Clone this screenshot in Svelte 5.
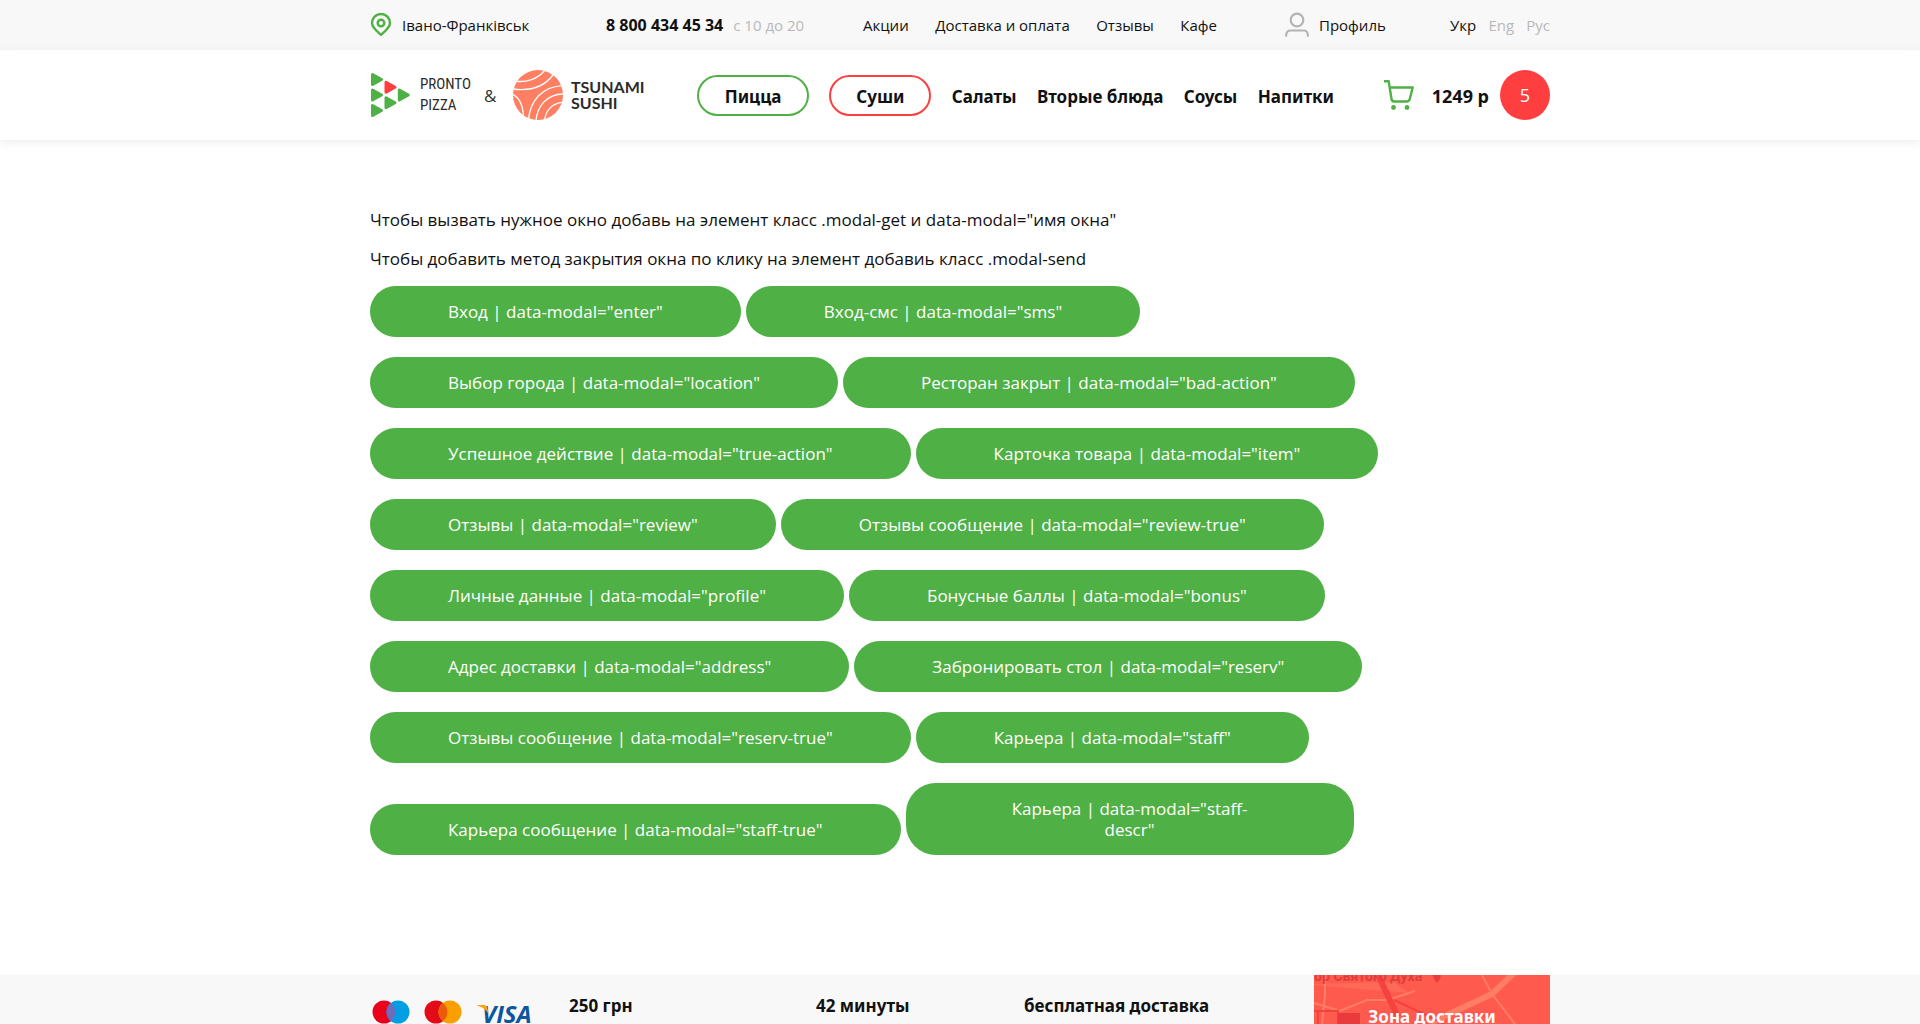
<script>
  const topLinks = ['Акции', 'Доставка и оплата', 'Отзывы', 'Кафе'];
  const dishes = ['Салаты', 'Вторые блюда', 'Соусы', 'Напитки'];
  const rows = [
    [['Вход', 'enter'], ['Вход-смс', 'sms']],
    [['Выбор города', 'location'], ['Ресторан закрыт', 'bad-action']],
    [['Успешное действие', 'true-action'], ['Карточка товара', 'item']],
    [['Отзывы', 'review'], ['Отзывы сообщение', 'review-true']],
    [['Личные данные', 'profile'], ['Бонусные баллы', 'bonus']],
    [['Адрес доставки', 'address'], ['Забронировать стол', 'reserv']],
    [['Отзывы сообщение', 'reserv-true'], ['Карьера', 'staff']],
    [['Карьера сообщение', 'staff-true'], ['Карьера', 'staff-descr']]
  ];
</script>

<div class="page">
  <div class="topbar">
    <div class="container top">
      <a class="place" href="#city">
        <svg width="22" height="24" viewBox="0 0 22 24" fill="none" stroke="#4fb045" stroke-width="2.4">
          <path d="M11 21.8C8 19.2 2 14.8 2 10a9 9 0 0 1 18 0c0 4.800-6 9.200-9 11.800z" stroke-linejoin="round" />
          <circle cx="11" cy="10" r="3.300" />
        </svg>
        Івано-Франківськ
      </a>
      <div class="phone"><a href="tel:88004344534">8 800 434 45 34</a><span>с 10 до 20</span></div>
      <nav class="links">
        {#each topLinks as link}<a href="#{link}">{link}</a>{/each}
      </nav>
      <a class="profile" href="#profile">
        <svg width="24" height="26" viewBox="0 0 24 26" fill="none" stroke="#b4b4b4" stroke-width="2.200" stroke-linecap="round">
          <circle cx="12" cy="8" r="6.300" />
          <path d="M1.200 23.800v-1.300a4 4 0 0 1 4-4h13.600a4 4 0 0 1 4 4v1.300" />
        </svg>
        Профиль
      </a>
      <div class="langs">
        <a class="current" href="#uk">Укр</a><a href="#en">Eng</a><a href="#ru">Рус</a>
      </div>
    </div>
  </div>

  <header>
    <div class="container head">
      <div class="brands">
        <a class="brand pronto" href="#pizza">
          <svg width="41" height="46" viewBox="0 0 41 46" stroke-width="3" stroke-linejoin="round">
            <g fill="#4fb045" stroke="#4fb045">
              <path d="M2.500 2.500v10l9-5z" /><path d="M2.500 18v10l9-5z" /><path d="M2.500 33.500v10l9-5z" />
              <path d="M16 25.800v10l9-5z" /><path d="M29.300 18v10l9-5z" />
            </g>
            <path fill="#ff3f3f" stroke="#ff3f3f" d="M16 10.300v10l9-5z" />
          </svg>
          <span>PRONTO<br />PIZZA</span>
        </a>
        <span class="amp">&amp;</span>
        <a class="brand tsunami" href="#sushi">
          <svg width="50" height="50" viewBox="0 0 50 50">
            <clipPath id="disc"><circle cx="25" cy="25" r="25" /></clipPath>
            <g clip-path="url(#disc)">
              <path fill="#ff7f63" d="M0 0h50v50H0z" />
              <g fill="none" stroke="#fff" stroke-width="1.300">
                <path d="M2 11C13 13 25 9 32 0" />
                <path d="M0 19c16 2 31-2 40-14" />
                <path d="M-1 24c7 3 11 11 11.500 23" />
                <path d="M15.500 50C17 31 29 16 51 15.500" />
                <path d="M23 51c1-15 11-27 28-27" />
                <path d="M31.500 51c1-10 7-18 19-19" />
              </g>
            </g>
          </svg>
          <span>TSUNAMI<br />SUSHI</span>
        </a>
      </div>
      <nav class="menu">
        <a class="pill" href="#pizza">Пицца</a>
        <a class="pill red" href="#sushi">Суши</a>
        {#each dishes as dish}<a href="#{dish}">{dish}</a>{/each}
      </nav>
      <a class="cart" href="#cart">
        <svg width="30" height="30" viewBox="0 0 30 30" fill="none" stroke="#4fb045" stroke-width="2.400" stroke-linejoin="round">
          <path d="M0 1.300h4.700L7.500 19a3 3 0 0 0 3 2.500h12.300a3 3 0 0 0 2.900-2.200l3-11.800H6" />
          <g fill="#4fb045" stroke="none"><circle cx="9.500" cy="27.500" r="2.400" /><circle cx="23" cy="27.500" r="2.400" /></g>
        </svg>
        <span class="sum">1249 р</span>
        <span class="count">5</span>
      </a>
    </div>
  </header>

  <main class="container">
    <div class="intro">
      <p>Чтобы вызвать нужное окно добавь на элемент класс .modal-get и data-modal="имя окна"</p>
      <p>Чтобы добавить метод закрытия окна по клику на элемент добавиь класс .modal-send</p>
    </div>
    {#each rows as row}
      <div class="row">
        {#each row as [title, modal]}
          <button type="button" data-modal={modal}>{title} | data-modal="{modal}"</button>
        {/each}
      </div>
    {/each}
  </main>

  <footer>
    <div class="container foot">
      <div class="cards">
        <svg width="38" height="24" viewBox="0 0 38 24" role="img" aria-label="Maestro">
          <circle cx="12" cy="12" r="11.500" fill="#eb001b" /><circle cx="26" cy="12" r="11.500" fill="#009fe3" />
          <path d="M19 2.900a11.500 11.500 0 0 1 0 18.200a11.500 11.500 0 0 1 0-18.200z" fill="#6c6bbd" />
        </svg>
        <svg width="38" height="24" viewBox="0 0 38 24" role="img" aria-label="Mastercard">
          <circle cx="12" cy="12" r="11.500" fill="#e30b17" /><circle cx="26" cy="12" r="11.500" fill="#f9a000" />
          <path d="M19 2.900a11.500 11.500 0 0 1 0 18.200a11.500 11.500 0 0 1 0-18.200z" fill="#ea5b0c" />
        </svg>
        <svg class="visa" width="60" height="24" viewBox="0 0 60 24">
          <text x="6" y="23">VISA</text>
          <path d="M1 5h7c2 0 3 1 3 2l2 8C11 10 6 7 1 5.500z" fill="#f9a51a" />
        </svg>
      </div>
      <strong>250 грн</strong>
      <strong>42 минуты</strong>
      <strong>бесплатная доставка</strong>
      <a class="zone" href="#zone">
        <svg viewBox="0 0 236 49" preserveAspectRatio="xMidYMin slice" aria-hidden="true">
          <path fill="#ff5a4e" d="M0 0h236v49H0z" />
          <path fill="#ff6a58" d="M0 9l80-2 14 11-94-8z" />
          <g fill="none" stroke="#ff7d64">
            <path stroke-width="6" d="M116 48l62-29 22-21" />
            <path stroke-width="2" d="M23 37l30-12h21l27-9M168 0l10 19 23 30M11 0v20L8 49M0 28l26 8" />
          </g>
          <g fill="none" stroke="#f5423f">
            <path stroke-width="6" d="M64 0l20 42" />
            <path stroke-width="2" d="M0 36h24v13M4 49V36M80 25l30 14 20 10" />
          </g>
          <text x="0" y="6">ор Святого Духа</text>
          <path fill="#e93b3b" d="M24 38h22v11H24zM119 0h8l-1 4-3 4-3-4z" />
        </svg>
        <span>Зона доставки</span>
      </a>
    </div>
  </footer>
</div>

<style>
  :global(body) {
    margin: 0;
    background: #fff;
  }
  .page {
    display: flex;
    flex-direction: column;
    min-height: 100vh;
    color: #111;
    font: 17px/21px "Open Sans", "Noto Sans", sans-serif;
  }
  .container {
    box-sizing: border-box;
    width: 100%;
    max-width: 1180px;
    margin: 0 auto;
  }
  a {
    color: inherit;
    text-decoration: none;
    white-space: nowrap;
  }
  svg {
    display: block;
    flex: none;
  }
  .topbar {
    background: #f8f8f8;
    font-size: 15px;
  }
  .top {
    display: grid;
    grid-template-columns: 236px 257px 422px 165px 1fr;
    align-items: center;
    height: 50px;
  }
  .place, .profile {
    display: flex;
    align-items: center;
    gap: 10px;
  }
  .phone {
    display: flex;
    gap: 10px;
  }
  .phone a {
    font-size: 16px;
    font-weight: 700;
  }
  .phone span, .langs {
    color: #b8b8b8;
  }
  .links {
    display: flex;
    justify-content: space-between;
    width: 354px;
  }
  .langs {
    display: flex;
    justify-content: space-between;
  }
  .current {
    color: #111;
  }
  header {
    box-shadow: 0 2px 10px rgba(0, 0, 0, 0.08);
  }
  .head {
    display: grid;
    grid-template-columns: 327px 637px 1fr;
    align-items: center;
    height: 90px;
  }
  .brands, .brand, .cart {
    display: flex;
    align-items: center;
  }
  .brand {
    color: #2b2b2b;
  }
  .pronto {
    gap: 9px;
    width: 114px;
    font: 15px/21px "Roboto Condensed", "Liberation Sans Narrow", "DejaVu Sans Condensed", sans-serif;
  }
  .amp {
    width: 29px;
    color: #333;
  }
  .tsunami {
    gap: 8px;
    font: 700 16px/16px Lato, sans-serif;
  }
  .menu {
    display: flex;
    align-items: center;
    justify-content: space-between;
    font-family: "Noto Sans", sans-serif;
    font-weight: 700;
  }
  .menu a {
    padding-top: 2px;
  }
  .menu .pill {
    box-sizing: border-box;
    min-width: 112px;
    padding: 9px 20px 7px;
    border: 2px solid #4fb045;
    border-radius: 21px;
    text-align: center;
  }
  .menu .red {
    min-width: 102px;
    border-color: #ff3f3f;
  }
  .cart {
    justify-content: flex-end;
    font-size: 18px;
  }
  .sum {
    margin: 0 11px 0 18px;
    padding-top: 2px;
    font-weight: 700;
  }
  .count {
    width: 50px;
    border-radius: 50%;
    background: #ff3f3f;
    color: #fff;
    line-height: 50px;
    text-align: center;
  }
  main {
    flex: 1;
    padding: 69px 0 100px;
  }
  .intro {
    display: grid;
    gap: 18px;
    margin-bottom: 17px;
  }
  p {
    margin: 0;
  }
  .row {
    display: flex;
    align-items: flex-end;
    gap: 5px;
    margin-bottom: 20px;
  }
  button {
    padding: 15px 78px;
    border: 0;
    border-radius: 30px;
    background: #4fb045;
    color: #fff;
    font: inherit;
    cursor: pointer;
  }
  .row:last-child button:last-child {
    box-sizing: border-box;
    max-width: 448px;
    padding: 15px 90px;
  }
  footer {
    background: #f8f8f8;
  }
  .foot {
    display: grid;
    grid-template-columns: 199px 247px 208px 290px 236px;
  }
  .cards {
    display: flex;
    gap: 14px;
    padding: 25px 0 0 2px;
  }
  .visa text {
    fill: #0b569f;
    font: italic 700 24px "Open Sans", sans-serif;
  }
  strong {
    padding-top: 20px;
    font-family: "Noto Sans", sans-serif;
    font-weight: 700;
  }
  .zone {
    display: grid;
    height: 49px;
    overflow: hidden;
    color: #fff;
    font-family: "Noto Sans", sans-serif;
    font-weight: 700;
    text-align: center;
  }
  .zone svg, .zone span {
    grid-area: 1 / 1;
  }
  .zone svg {
    width: 100%;
    height: 49px;
  }
  .zone span {
    position: relative;
    padding-top: 33px;
    line-height: 18px;
  }
  .zone text {
    fill: #dd3f3c;
    font: 700 14px Roboto, sans-serif;
  }
</style>
